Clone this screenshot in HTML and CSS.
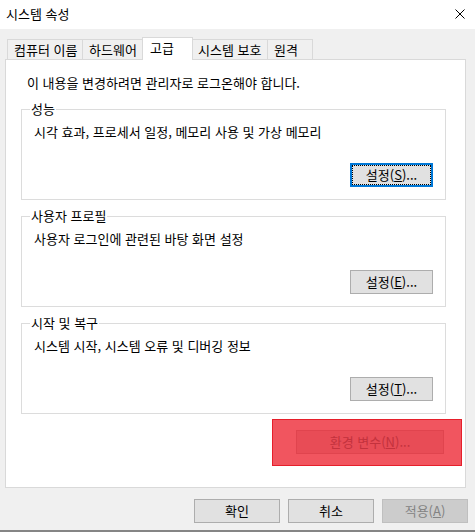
FILE: index.html
```html
<!DOCTYPE html>
<html lang="ko">
<head>
<meta charset="utf-8">
<title>시스템 속성</title>
<link rel="stylesheet" href="styles.css">
</head>
<body>
<div class="window">
  <div class="titlebar">
    <span class="title">시스템 속성</span>
    <svg class="close" width="10" height="10" viewBox="0 0 10 10"><path d="M0.5 0.5 L9.5 9.5 M9.5 0.5 L0.5 9.5" stroke="#000" stroke-width="1" fill="none"/></svg>
  </div>
  <div class="client">
    <div class="tabs">
      <div class="tab tab-computer">컴퓨터 이름</div>
      <div class="tab tab-hardware">하드웨어</div>
      <div class="tab tab-active">고급</div>
      <div class="tab tab-protect">시스템 보호</div>
      <div class="tab tab-remote">원격</div>
    </div>
    <div class="panel">
      <div class="intro">이 내용을 변경하려면 관리자로 로그온해야 합니다.</div>
      <fieldset class="group">
        <legend class="legend">성능</legend>
        <div class="group-body">
          <div class="desc">시각 효과, 프로세서 일정, 메모리 사용 및 가상 메모리</div>
          <div class="btn-row"><button class="btn btn-focus">설정(<u>S</u>)...</button></div>
        </div>
      </fieldset>
      <fieldset class="group">
        <legend class="legend">사용자 프로필</legend>
        <div class="group-body">
          <div class="desc">사용자 로그인에 관련된 바탕 화면 설정</div>
          <div class="btn-row"><button class="btn">설정(<u>E</u>)...</button></div>
        </div>
      </fieldset>
      <fieldset class="group">
        <legend class="legend">시작 및 복구</legend>
        <div class="group-body">
          <div class="desc">시스템 시작, 시스템 오류 및 디버깅 정보</div>
          <div class="btn-row"><button class="btn">설정(<u>T</u>)...</button></div>
        </div>
      </fieldset>
      <div class="env-row">
        <div class="highlight">
          <button class="btn btn-env">환경 변수(<u>N</u>)...</button>
        </div>
      </div>
    </div>
    <div class="footer">
      <button class="btn btn-foot">확인</button>
      <button class="btn btn-foot">취소</button>
      <button class="btn btn-foot btn-disabled">적용(<u>A</u>)</button>
    </div>
  </div>
</div>
</body>
</html>
```

FILE: styles.css
```css
* { box-sizing: border-box; }
html, body {
  margin: 0;
  padding: 0;
  width: 475px;
  height: 532px;
  overflow: hidden;
  background: #f0f0f0;
}
body {
  font-family: "Noto Sans CJK KR", "Noto Sans", sans-serif;
  font-size: 13px;
  line-height: 16px;
  color: #000;
}
.window {
  width: 475px;
  height: 532px;
  display: flex;
  flex-direction: column;
}
.titlebar {
  height: 29px;
  background: #fff;
  display: flex;
  align-items: flex-start;
  justify-content: space-between;
  padding: 6px 10px 0 6px;
}
.title { line-height: 16px; }
.close { margin-top: 3px; }
.client {
  flex: 1;
  display: flex;
  flex-direction: column;
  padding: 8px 0 0 5px;
  border-bottom: 2px solid #858585;
}
.tabs {
  display: flex;
  align-items: flex-end;
  height: 22px;
  padding-left: 2px;
  position: relative;
  z-index: 1;
}
.tab {
  flex: none;
  height: 20px;
  line-height: 19px;
  padding: 0 0 0 6px;
  border: 1px solid #d9d9d9;
  border-bottom: none;
  border-right: none;
  background: #f0f0f0;
  white-space: nowrap;
  overflow: hidden;
}
.tab-computer { width: 75px; }
.tab-hardware { width: 62px; }
.tab-active {
  width: 51px;
  height: 23px;
  margin: 0 -2px -1px -2px;
  padding: 0 0 2px 7px;
  background: #fff;
  border-right: 1px solid #d9d9d9;
  line-height: 20px;
  position: relative;
  z-index: 2;
}
.tab-protect { width: 76px; border-left: none; padding-left: 7px; }
.tab-remote { width: 46px; border-right: 1px solid #d9d9d9; }
.panel {
  width: 461px;
  height: 429px;
  background: #fff;
  border: 1px solid #d9d9d9;
  padding: 15px 19px 0 15px;
  display: flex;
  flex-direction: column;
}
.intro { margin-left: 6px; height: 16px; white-space: nowrap; }
.group {
  margin: 10px 0 0 0;
  padding: 0;
  border: 1px solid #dcdcdc;
  min-width: 0;
}
.group + .group { margin-top: 8px; }
.legend {
  margin-left: 8px;
  padding: 0 1px;
  line-height: 16px;
}
.group-body {
  padding: 7px 12px 12px 12px;
  display: flex;
  flex-direction: column;
}
.desc { height: 16px; white-space: nowrap; }
.btn-row {
  display: flex;
  justify-content: flex-end;
  margin-top: 23px;
}
.btn {
  font-family: inherit;
  font-size: 13px;
  line-height: 16px;
  color: #000;
  width: 83px;
  height: 24px;
  padding: 0;
  margin: 0;
  background: #e1e1e1;
  border: 1px solid #adadad;
  border-radius: 0;
  text-align: center;
  white-space: nowrap;
}
.btn u { text-underline-offset: 1px; }
.btn-focus {
  border: 2px solid #0078d7;
  outline: 1px dotted #000;
  outline-offset: -3px;
}
.env-row {
  display: flex;
  justify-content: flex-end;
  margin: 5px -16px 0 0;
}
.highlight {
  width: 190px;
  height: 47px;
  background: #f1555f;
  border: 1px solid #e61f2b;
  padding: 10px 16px 10px 23px;
}
.btn-env {
  width: 148px;
  background: #e84c56;
  border-color: #e0444e;
  color: #c3323d;
}
.footer {
  display: flex;
  justify-content: flex-end;
  gap: 8px;
  padding: 11px 7px 0 0;
}
.btn-foot { width: 86px; }
.btn-disabled {
  background: #cccccc;
  border-color: #bfbfbf;
  color: #838383;
}
```
